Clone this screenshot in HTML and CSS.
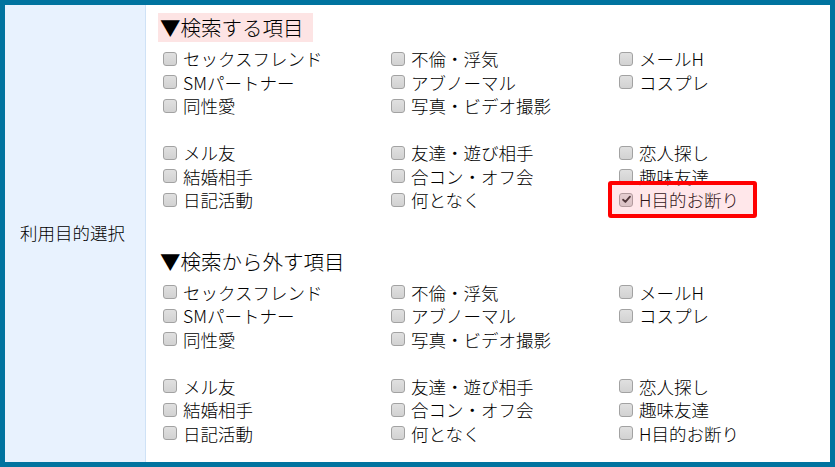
FILE: index.html
```html
<!DOCTYPE html>
<html lang="ja">
<head>
<meta charset="utf-8">
<link rel="stylesheet" href="styles.css">
</head>
<body>
<div class="frame">
  <div class="label-col">利用目的選択</div>
  <div class="content">
    <div class="section">
      <div class="head head-pink">▼検索する項目</div>
      <div class="grid">
        <div class="item"><span class="cb"></span>セックスフレンド</div>
        <div class="item"><span class="cb"></span>不倫・浮気</div>
        <div class="item"><span class="cb"></span>メールH</div>
        <div class="item"><span class="cb"></span>SMパートナー</div>
        <div class="item"><span class="cb"></span>アブノーマル</div>
        <div class="item"><span class="cb"></span>コスプレ</div>
        <div class="item"><span class="cb"></span>同性愛</div>
        <div class="item"><span class="cb"></span>写真・ビデオ撮影</div>
        <div class="item"></div>
      </div>
      <div class="grid grid-second">
        <div class="item"><span class="cb"></span>メル友</div>
        <div class="item"><span class="cb"></span>友達・遊び相手</div>
        <div class="item"><span class="cb"></span>恋人探し</div>
        <div class="item"><span class="cb"></span>結婚相手</div>
        <div class="item"><span class="cb"></span>合コン・オフ会</div>
        <div class="item"><span class="cb"></span>趣味友達</div>
        <div class="item"><span class="cb"></span>日記活動</div>
        <div class="item"><span class="cb"></span>何となく</div>
        <div class="item item-marked"><span class="cb cb-checked"><svg viewBox="0 0 13 13" width="11" height="11"><path d="M2.5 6.8 L5.2 9.4 L10.6 3.2" fill="none" stroke="#2a2a2a" stroke-width="2.2" stroke-linecap="round" stroke-linejoin="round"/></svg></span>H目的お断り</div>
      </div>
    </div>
    <div class="section section-exclude">
      <div class="head">▼検索から外す項目</div>
      <div class="grid">
        <div class="item"><span class="cb"></span>セックスフレンド</div>
        <div class="item"><span class="cb"></span>不倫・浮気</div>
        <div class="item"><span class="cb"></span>メールH</div>
        <div class="item"><span class="cb"></span>SMパートナー</div>
        <div class="item"><span class="cb"></span>アブノーマル</div>
        <div class="item"><span class="cb"></span>コスプレ</div>
        <div class="item"><span class="cb"></span>同性愛</div>
        <div class="item"><span class="cb"></span>写真・ビデオ撮影</div>
        <div class="item"></div>
      </div>
      <div class="grid grid-second">
        <div class="item"><span class="cb"></span>メル友</div>
        <div class="item"><span class="cb"></span>友達・遊び相手</div>
        <div class="item"><span class="cb"></span>恋人探し</div>
        <div class="item"><span class="cb"></span>結婚相手</div>
        <div class="item"><span class="cb"></span>合コン・オフ会</div>
        <div class="item"><span class="cb"></span>趣味友達</div>
        <div class="item"><span class="cb"></span>日記活動</div>
        <div class="item"><span class="cb"></span>何となく</div>
        <div class="item"><span class="cb"></span>H目的お断り</div>
      </div>
    </div>
  </div>
</div>
</body>
</html>
```
FILE: styles.css
```css
html, body {
  margin: 0;
  padding: 0;
  background: #ffffff;
}
body {
  font-family: "Noto Sans CJK JP", "Noto Sans", sans-serif;
  font-weight: 300;
  color: #000000;
}
.frame {
  box-sizing: border-box;
  width: 835px;
  height: 467px;
  border: 5px solid #00739f;
  display: flex;
  background: #ffffff;
}
.label-col {
  box-sizing: border-box;
  width: 141px;
  flex: 0 0 141px;
  background: #e8f2fe;
  border-right: 1px solid #cfe2f6;
  display: flex;
  align-items: center;
  padding-left: 15px;
  padding-bottom: 3px;
  font-size: 17.5px;
}
.content {
  flex: 1;
  padding: 8px 0 0 12px;
}
.head {
  display: inline-block;
  font-size: 20.5px;
  line-height: 29px;
  height: 29px;
  padding: 0 9px 0 2px;
  white-space: nowrap;
}
.head-pink {
  background: #fde4e4;
}
.grid {
  display: grid;
  grid-template-columns: 228px 228px 228px;
  margin-top: 5px;
  font-size: 17.5px;
  line-height: 23.5px;
}
.grid-second {
  margin-top: 23.5px;
}
.section-exclude {
  margin-top: 35px;
}
.item {
  height: 23.5px;
  white-space: nowrap;
  display: flex;
  align-items: center;
  padding-left: 5px;
}
.cb {
  box-sizing: border-box;
  width: 14px;
  height: 14px;
  flex: 0 0 14px;
  border: 1px solid #a2a2a2;
  border-radius: 3px;
  background: linear-gradient(#e0e0e0, #d2d2d2);
  margin-right: 6px;
  display: flex;
  align-items: center;
  justify-content: center;
}
.item-marked {
  position: relative;
}
.item-marked::after {
  content: "";
  position: absolute;
  left: -6px;
  top: -7px;
  width: 149px;
  height: 37px;
  box-sizing: border-box;
  border: 4px solid #ff0000;
  border-radius: 3px;
  background: rgba(255, 120, 140, 0.18);
}
```
